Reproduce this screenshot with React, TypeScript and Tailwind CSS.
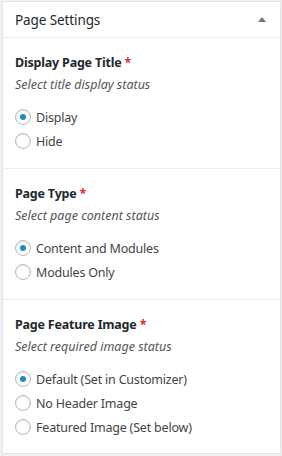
import React from "react";

type Opt = { label: string; checked?: boolean };

function Radio({ label, checked }: Opt) {
  return (
    <div className="flex h-[24px] items-center">
      <span className="flex h-[16px] w-[16px] items-center justify-center rounded-full border border-[#b4b9be] bg-white shadow-[inset_0_1px_2px_rgba(0,0,0,0.1)]">
        {checked && <span className="h-[6px] w-[6px] rounded-full bg-[#1e8cbe]" />}
      </span>
      <span className="ml-[5px] pt-[1px] text-[12.5px] leading-[20px] tracking-[-0.2px] text-[#444]">{label}</span>
    </div>
  );
}

function Section({
  title,
  sub,
  options,
  last,
}: {
  title: string;
  sub: string;
  options: Opt[];
  last?: boolean;
}) {
  return (
    <div className={`px-[12px] pt-[15px] ${last ? "pb-[14px]" : "border-b border-[#eee] pb-[15px]"}`}>
      <div className="text-[12.5px] font-bold leading-[20px] tracking-[-0.2px] text-[#23282d]">
        {title} <span className="text-[#dc3232]">*</span>
      </div>
      <div className="mt-[2px] text-[12.5px] italic leading-[20px] text-[#555]">{sub}</div>
      <div className="mt-[10px] flex flex-col">
        {options.map((o) => (
          <Radio key={o.label} {...o} />
        ))}
      </div>
    </div>
  );
}

export default function App() {
  return (
    <div
      className="h-[456px] w-[282px] bg-[#f1f1f1] pb-[2px] pl-[2px] pr-[1px] pt-[1px]"
      style={{ fontFamily: '"Noto Sans", "Open Sans", sans-serif' }}
    >
      <div className="flex h-full flex-col border border-[#e5e5e5] bg-white">
        <div className="flex h-[36px] items-center justify-between border-b border-[#eee] pl-[12px] pr-[14px]">
          <span className="text-[13.5px] leading-[20px] tracking-[-0.1px] text-[#23282d]">Page Settings</span>
          <svg width="8" height="5" viewBox="0 0 8 5">
            <path d="M0 5 L4 0 L8 5 Z" fill="#72777c" />
          </svg>
        </div>
        <Section
          title="Display Page Title"
          sub="Select title display status"
          options={[{ label: "Display", checked: true }, { label: "Hide" }]}
        />
        <Section
          title="Page Type"
          sub="Select page content status"
          options={[{ label: "Content and Modules", checked: true }, { label: "Modules Only" }]}
        />
        <Section
          title="Page Feature Image"
          sub="Select required image status"
          options={[
            { label: "Default (Set in Customizer)", checked: true },
            { label: "No Header Image" },
            { label: "Featured Image (Set below)" },
          ]}
          last
        />
      </div>
    </div>
  );
}
